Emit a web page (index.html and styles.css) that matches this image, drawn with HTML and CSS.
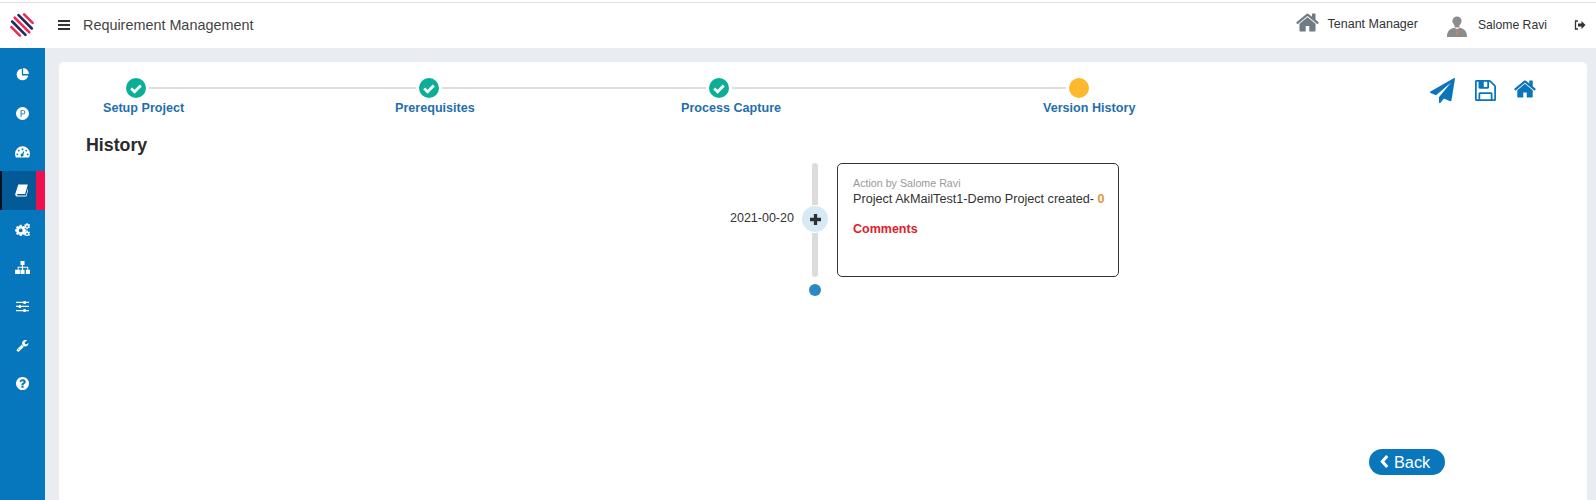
FILE: index.html
```html
<!DOCTYPE html>
<html lang="en">
<head>
<meta charset="utf-8">
<title>Requirement Management</title>
<link rel="stylesheet" href="styles.css">
</head>
<body>
<svg class="defs" aria-hidden="true">
  <symbol id="fa-home" viewBox="0 0 1792 1792"><path d="M1472 992v480q0 26-19 45t-45 19h-384v-384h-256v384h-384q-26 0-45-19t-19-45v-480q0-1 .5-3t.5-3l575-474 575 474q1 2 1 6zm223-69l-62 74q-8 9-21 11h-3q-13 0-21-7l-692-577-692 577q-12 8-24 7-13-2-21-11l-62-74q-8-10-7-23.5t11-21.5l719-599q32-26 76-26t76 26l244 204v-195q0-14 9-23t23-9h192q14 0 23 9t9 23v408l219 182q10 8 11 21.5t-7 23.5z"/></symbol>
  <symbol id="fa-check" viewBox="0 0 20 20"><path d="M5.2 10.4l3.4 3.3 6.2-6.3" fill="none" stroke="#fff" stroke-width="2.8"/></symbol>
</svg>

<header class="topbar">
  <svg class="logo" viewBox="0 0 24 24">
    <g stroke-width="2.6" stroke-linecap="round">
      <path d="M14.1 1.4L22.6 9.9" stroke="#ee2a5b"/>
      <path d="M8.53 2.17L21.83 15.47" stroke="#1c2b57"/>
      <path d="M4.72 4.72L19.28 19.28" stroke="#ee2a5b"/>
      <path d="M2.17 8.53L15.47 21.83" stroke="#1c2b57"/>
      <path d="M1.4 14.1L9.9 22.6" stroke="#ee2a5b"/>
    </g>
  </svg>
  <svg class="menu-icon" viewBox="0 0 12 10"><path d="M0 0h12v2H0zM0 4h12v2H0zM0 8h12v2H0z"/></svg>
  <span class="app-title">Requirement Management</span>
  <div class="top-right">
    <svg class="tenant-icon"><use href="#fa-home"/></svg>
    <span class="tenant-name">Tenant Manager</span>
    <svg class="user-icon" viewBox="0 0 20 22">
      <circle cx="10" cy="6" r="4.6"/>
      <path d="M7.5 9h5v3.5h-5z"/>
      <path d="M0 22c0-5 1.5-7.5 6.5-9.3L10 14l3.500-1.300c5 1.800 6.500 4.300 6.500 9.300z"/>
      <path d="M9.500 14h1l.5 6h-2z" fill="#c98a6a"/>
    </svg>
    <span class="user-name">Salome Ravi</span>
    <svg class="logout-icon" viewBox="0 0 12 10"><path d="M4 1H1.500v8H4" fill="none" stroke="#333" stroke-width="1.300"/><path d="M4 3.500h3.500V1L11.500 5 7.500 9V6.500H4z" fill="#333"/></svg>
  </div>
</header>

<div class="shell">
  <nav class="sidebar">
    <a class="nav-item"><svg class="nav-icon" viewBox="0 0 14 14"><path d="M6.300.7A6.300 6.300 0 1 0 13.200 8H6.300z"/><path d="M7.700 0v6.500h6.200A6.500 6.500 0 0 0 7.700 0z"/></svg></a>
    <a class="nav-item"><svg class="nav-icon" viewBox="0 0 14 14"><path fill-rule="evenodd" d="M7 0a7 7 0 1 1 0 14A7 7 0 0 1 7 0zM5 3.500v7h1V7.900h1.500C9 7.900 10 7 10 5.700S9 3.500 7.500 3.500zM6 4.400h1.400C8.400 4.400 9 4.900 9 5.700S8.400 7 7.400 7H6z"/></svg></a>
    <a class="nav-item"><svg class="nav-icon nav-wide" viewBox="0 0 16 13"><path fill-rule="evenodd" d="M8 1a8 8 0 0 1 8 8c0 1.500-.4 2.800-1 4H1c-.6-1.200-1-2.500-1-4a8 8 0 0 1 8-8zM8 3a1 1 0 1 0 0 2 1 1 0 0 0 0-2zM4 4.500a1 1 0 1 0 0 2 1 1 0 0 0 0-2zM12 4.500a1 1 0 1 0 0 2 1 1 0 0 0 0-2zM2.500 8.500a1 1 0 1 0 0 2 1 1 0 0 0 0-2zM13.500 8.500a1 1 0 1 0 0 2 1 1 0 0 0 0-2zM10 5.500L7.200 8.800a1.600 1.600 0 1 0 1.800 1z"/></svg></a>
    <a class="nav-item nav-active"><svg class="nav-icon" viewBox="0 0 14 14"><path d="M3.500.5h10.300l-2.900 10.300H3c-.8 0-1 .4-.9.800.1.500.5.700 1 .7h8.700l2-7.300.6.500-2.100 7.900H2.600C1.300 13.400.400 12.800.300 11.800c-.1-.5 0-1 .1-1.300z"/></svg></a>
    <a class="nav-item"><svg class="nav-icon nav-wide" viewBox="0 0 16 14"><path fill-rule="evenodd" d="M4.200 3h2l.3 1.300 1 .5L8.700 4.100l1.400 1.400-.7 1.200.4 1 1.300.4v2l-1.300.3-.4 1 .7 1.200-1.400 1.300-1.200-.7-1 .4-.3 1.400h-2l-.3-1.400-1-.4-1.200.7L.100 12.600l.7-1.200-.4-1L-.9 10V8l1.300-.3.4-1-.7-1.200L1.500 4.100l1.200.7 1-.5zM5.200 7a2 2 0 1 0 0 4 2 2 0 0 0 0-4z" transform="translate(.9 -1)"/><path fill-rule="evenodd" d="M12.300 0l1.300.2.200 1 .7.400.9-.4.700 1.100-.7.800v.8l.7.700-.7 1.100-.9-.3-.7.400-.2 1h-1.300l-.2-1-.7-.4-.9.300-.6-1.100.6-.7v-.8l-.6-.8.6-1.100.9.400.7-.4zM12.900 2.800a1 1 0 1 0 0 2 1 1 0 0 0 0-2z"/><path fill-rule="evenodd" d="M12.300 8l1.300.2.200 1 .7.400.9-.4.700 1.100-.7.800v.8l.7.700-.7 1.100-.9-.3-.7.400-.2 1h-1.300l-.2-1-.7-.4-.9.300-.6-1.100.6-.7v-.8l-.6-.8.6-1.100.9.400.7-.4zM12.900 10.800a1 1 0 1 0 0 2 1 1 0 0 0 0-2z"/></svg></a>
    <a class="nav-item"><svg class="nav-icon nav-wide" viewBox="0 0 16 14"><path d="M5.800 0h4.400v4.300H8.600v2h5.600v3h1.800V14h-4.400V9.300h1.600V7.300H8.600v2h1.600V14H5.800V9.300h1.600v-2H3.800v2h1.400V14H0V9.300h2.800v-3h4.600v-2H5.800z"/></svg></a>
    <a class="nav-item"><svg class="nav-icon" viewBox="0 0 14 14"><path d="M0 2h8V1h2.500v1H14v1.300h-3.500v1H8v-1H0zM0 6.300h3V5.300h2.500v1H14v1.300H5.500v1H3v-1H0zM0 10.700h8v-1h2.500v1H14V12h-3.500v1H8v-1H0z"/></svg></a>
    <a class="nav-item"><svg class="nav-icon" viewBox="0 0 1792 1792"><path d="M448 1472q0-26-19-45t-45-19-45 19-19 45 19 45 45 19 45-19 19-45zm644-420l-682 682q-37 37-90 37-52 0-91-37l-106-108q-38-36-38-90 0-53 38-91l681-681q39 98 114.500 173.500t173.500 114.500zm634-435q0 39-23 106-47 134-164.500 217.500t-258.500 83.500q-185 0-316.500-131.500t-131.500-316.500 131.500-316.500 316.500-131.500q58 0 121.500 16.500t107.500 46.500q16 11 16 28t-16 28l-293 169v224l193 107q5-3 79-48.500t135.500-81 70.500-35.500q15 0 23.500 10t8.500 25z"/></svg></a>
    <a class="nav-item"><svg class="nav-icon" viewBox="128 128 1536 1536"><path d="M1024 1376v-192q0-14-9-23t-23-9h-192q-14 0-23 9t-9 23v192q0 14 9 23t23 9h192q14 0 23-9t9-23zm256-672q0-88-55.500-163t-138.500-116-170-41q-243 0-371 213-15 24 8 42l132 100q7 6 19 6 16 0 25-12 53-68 86-92 34-24 86-24 48 0 85.500 26t37.500 59q0 38-20 61t-68 45q-63 28-115.500 86.500t-52.500 125.500v36q0 14 9 23t23 9h192q14 0 23-9t9-23q0-19 21.500-49.500t54.500-49.500q32-18 49-28.500t46-35 44.500-48 28-60.500 12.500-81zm384 192q0 209-103 385.500t-279.500 279.500-385.500 103-385.500-103-279.500-279.500-103-385.500 103-385.500 279.500-279.500 385.500-103 385.500 103 279.500 279.500 103 385.500z"/></svg></a>
  </nav>

  <main class="panel">
    <div class="panel-top">
      <ol class="stepper">
        <li class="step step-setup"><span class="step-dot done"><svg class="check"><use href="#fa-check"/></svg></span><span class="step-label">Setup Project</span></li>
        <li class="step step-prereq"><span class="step-dot done"><svg class="check"><use href="#fa-check"/></svg></span><span class="step-label">Prerequisites</span></li>
        <li class="step step-process"><span class="step-dot done"><svg class="check"><use href="#fa-check"/></svg></span><span class="step-label">Process Capture</span></li>
        <li class="step step-version"><span class="step-dot current"></span><span class="step-label">Version History</span></li>
      </ol>
      <div class="actions">
        <svg class="act-plane" viewBox="0 0 1792 1792"><path d="M1764 11q33 24 27 64l-256 1536q-5 29-32 45-14 8-31 8-11 0-24-5l-453-185-242 295q-18 23-49 23-13 0-22-4-19-7-30.500-23.500t-11.500-36.500v-349l864-1059-1069 925-395-162q-37-14-40-55-2-40 32-59l1664-960q15-9 32-9 20 0 36 11z"/></svg>
        <svg class="act-save" viewBox="128 128 1536 1536"><path d="M512 1536h768v-384h-768v384zm896 0h128v-896q0-14-10-38.500t-20-34.500l-281-281q-10-10-34-20t-39-10v416q0 40-28 68t-68 28h-576q-40 0-68-28t-28-68v-416h-128v1280h128v-416q0-40 28-68t68-28h832q40 0 68 28t28 68v416zm-384-928v-320q0-13-9.500-22.500t-22.500-9.500h-192q-13 0-22.500 9.500t-9.500 22.500v320q0 13 9.500 22.500t22.500 9.500h192q13 0 22.500-9.500t9.500-22.500zm640 32v928q0 40-28 68t-68 28h-1344q-40 0-68-28t-28-68v-1344q0-40 28-68t68-28h928q40 0 88 20t76 48l280 280q28 28 48 76t20 88z"/></svg>
        <svg class="act-home"><use href="#fa-home"/></svg>
      </div>
    </div>

    <h1 class="page-title">History</h1>

    <section class="timeline">
      <span class="tl-date">2021-00-20</span>
      <div class="tl-axis">
        <span class="tl-bar"></span>
        <span class="tl-plus"><svg class="plus-icon" viewBox="0 0 10 10"><path d="M3.500 0h3v3.500H10v3H6.500V10h-3V6.500H0v-3h3.500z"/></svg></span>
        <span class="tl-dot"></span>
      </div>
      <article class="tl-card">
        <p class="tl-by">Action by Salome Ravi</p>
        <p class="tl-text">Project AkMailTest1-Demo Project created- <span class="tl-count">0</span></p>
        <p class="tl-comments">Comments</p>
      </article>
    </section>

    <div class="footer-row">
      <a class="back-btn"><svg class="back-icon" viewBox="0 0 8 12"><path d="M6.500 1L2 6l4.500 5" fill="none" stroke="#fff" stroke-width="2.800"/></svg>Back</a>
    </div>
  </main>
</div>
</body>
</html>
```

FILE: styles.css
```css
* { box-sizing: border-box; }
html, body { margin: 0; height: 500px; overflow: hidden; }
body {
  background: #e9edf2;
  font-family: "Liberation Sans", Arial, sans-serif;
  color: #333;
}
.defs { display: none; }

.topbar {
  height: 48px;
  background: #fff;
  box-shadow: inset 0 2px 0 #fff, inset 0 3px 0 #e2e2e2;
  display: flex;
  align-items: center;
  padding-left: 10px;
}
.logo { width: 24px; height: 24px; margin-top: 2px; }
.menu-icon { width: 12px; height: 10px; margin-left: 24px; margin-top: 1px; fill: #333; }
.app-title { margin-left: 13px; font-size: 14.400px; color: #444; margin-top: 1px; }
.top-right { margin-left: auto; display: flex; align-items: center; }
.tenant-icon { width: 25px; height: 25px; fill: #6f7c85; margin-bottom: 4px; }
.tenant-name { margin-left: 8px; font-size: 12.500px; color: #333; margin-bottom: 1px; }
.user-icon { width: 20px; height: 22px; margin-left: 29px; fill: #8c8c8c; margin-top: 4px; }
.user-name { margin-left: 11px; font-size: 12.200px; color: #333; margin-top: 2px; }
.logout-icon { width: 12px; height: 10px; margin: 2px 10px 0 27px; }

.shell { display: flex; height: 452px; }
.sidebar {
  width: 45px;
  flex: none;
  background: #0676bd;
  padding-top: 7px;
  display: flex;
  flex-direction: column;
}
.nav-item {
  height: 38.700px;
  padding-right: 1px;
  display: flex;
  align-items: center;
  justify-content: center;
}
.nav-icon { width: 13px; height: 13px; fill: #fff; }
.nav-wide { width: 15px; height: 13px; }
.nav-active {
  background: #045a96;
  border-left: 2px solid #04121f;
  border-right: 9px solid #f0104f;
  padding-right: 0;
  padding-left: 5px;
}

.panel {
  flex: 1;
  margin: 14px 9px 0 14px;
  background: #fff;
  border-radius: 5px 5px 0 0;
  padding: 16px 0 0 27px;
  display: flex;
  flex-direction: column;
}
.panel-top { display: flex; height: 54px; }
.stepper {
  list-style: none;
  margin: 0 0 0 17px;
  padding: 0;
  display: flex;
  position: relative;
  height: 40px;
}
.stepper::before {
  content: "";
  position: absolute;
  left: 22px;
  width: 950px;
  top: 9px;
  height: 2px;
  background: #dedede;
}
.step { position: relative; display: flex; flex-direction: column; align-items: flex-start; }
.step-setup { width: 292px; }
.step-prereq { width: 286px; }
.step-process { width: 362px; }
.step-version { width: 100px; }
.step-dot {
  width: 20px; height: 20px; border-radius: 50%;
  box-shadow: 0 0 0 3px #fff;
  display: block;
}
.step-setup .step-dot { margin-left: 23px; }
.step-prereq .step-dot { margin-left: 24px; }
.step-process .step-dot { margin-left: 28px; }
.step-version .step-dot { margin-left: 26px; }
.done { background: #0bae97; }
.current { background: #fdb92e; }
.check { width: 20px; height: 20px; display: block; }
.step-label {
  margin-top: 3px;
  font-size: 12.600px;
  font-weight: 700;
  color: #1f6fae;
  white-space: nowrap;
}
.actions { margin-left: auto; display: flex; align-items: flex-start; padding-right: 50px; }
.act-plane { width: 25px; height: 25px; fill: #0a75ba; }
.act-save { width: 21px; height: 21px; fill: #0a75ba; margin: 2px 0 0 20px; }
.act-home { width: 24px; height: 24px; fill: #0a75ba; margin: -1px 0 0 17px; }

.page-title {
  margin: 2px 0 0;
  font-size: 17.800px;
  line-height: 22px;
  font-weight: 700;
  color: #2b2b2b;
}

.timeline { display: flex; align-items: flex-start; margin: 7px 0 0 644px; height: 135px; }
.tl-date { width: 65px; margin-top: 47px; font-size: 12.500px; line-height: 16px; color: #333; white-space: nowrap; }
.tl-axis { position: relative; width: 27px; height: 135px; margin-left: 6px; }
.tl-bar { position: absolute; left: 11px; top: 0; width: 6px; height: 114px; background: #dcdcdc; border-radius: 3px; }
.tl-plus {
  position: absolute; left: 1px; top: 43px;
  width: 26px; height: 26px; border-radius: 50%;
  background: #d6e9f4;
  box-shadow: 0 0 0 1px #fff;
  display: flex; align-items: center; justify-content: center;
}
.plus-icon { width: 11px; height: 11px; fill: #2b2f36; }
.tl-dot { position: absolute; left: 8px; top: 121px; width: 12px; height: 12px; border-radius: 50%; background: #2a8abf; }
.tl-card {
  width: 282px; height: 114px; margin-left: 9px;
  border: 1px solid #333; border-radius: 5px;
  padding: 13px 15px;
  background: #fff;
}
.tl-card p { margin: 0; }
.tl-by { font-size: 10.700px; line-height: 13px; color: #999; }
.tl-text { font-size: 12.650px; line-height: 17px; padding-top: 1px; color: #333; white-space: nowrap; }
.tl-count { color: #e8953f; font-weight: 700; }
.tl-comments { margin-top: 13px !important; font-size: 12.500px; line-height: 17px; color: #e0202a; font-weight: 700; }

.footer-row { display: flex; justify-content: flex-end; margin: 151px 142px 0 0; }
.back-btn {
  width: 76px; height: 26px; border-radius: 13px;
  background: #0a77bd; color: #fff;
  font-size: 16.300px; line-height: 25px;
  display: flex; align-items: center;
  padding-left: 11px;
}
.back-icon { width: 9px; height: 13px; margin-right: 5px; margin-top: -2px; }
```
